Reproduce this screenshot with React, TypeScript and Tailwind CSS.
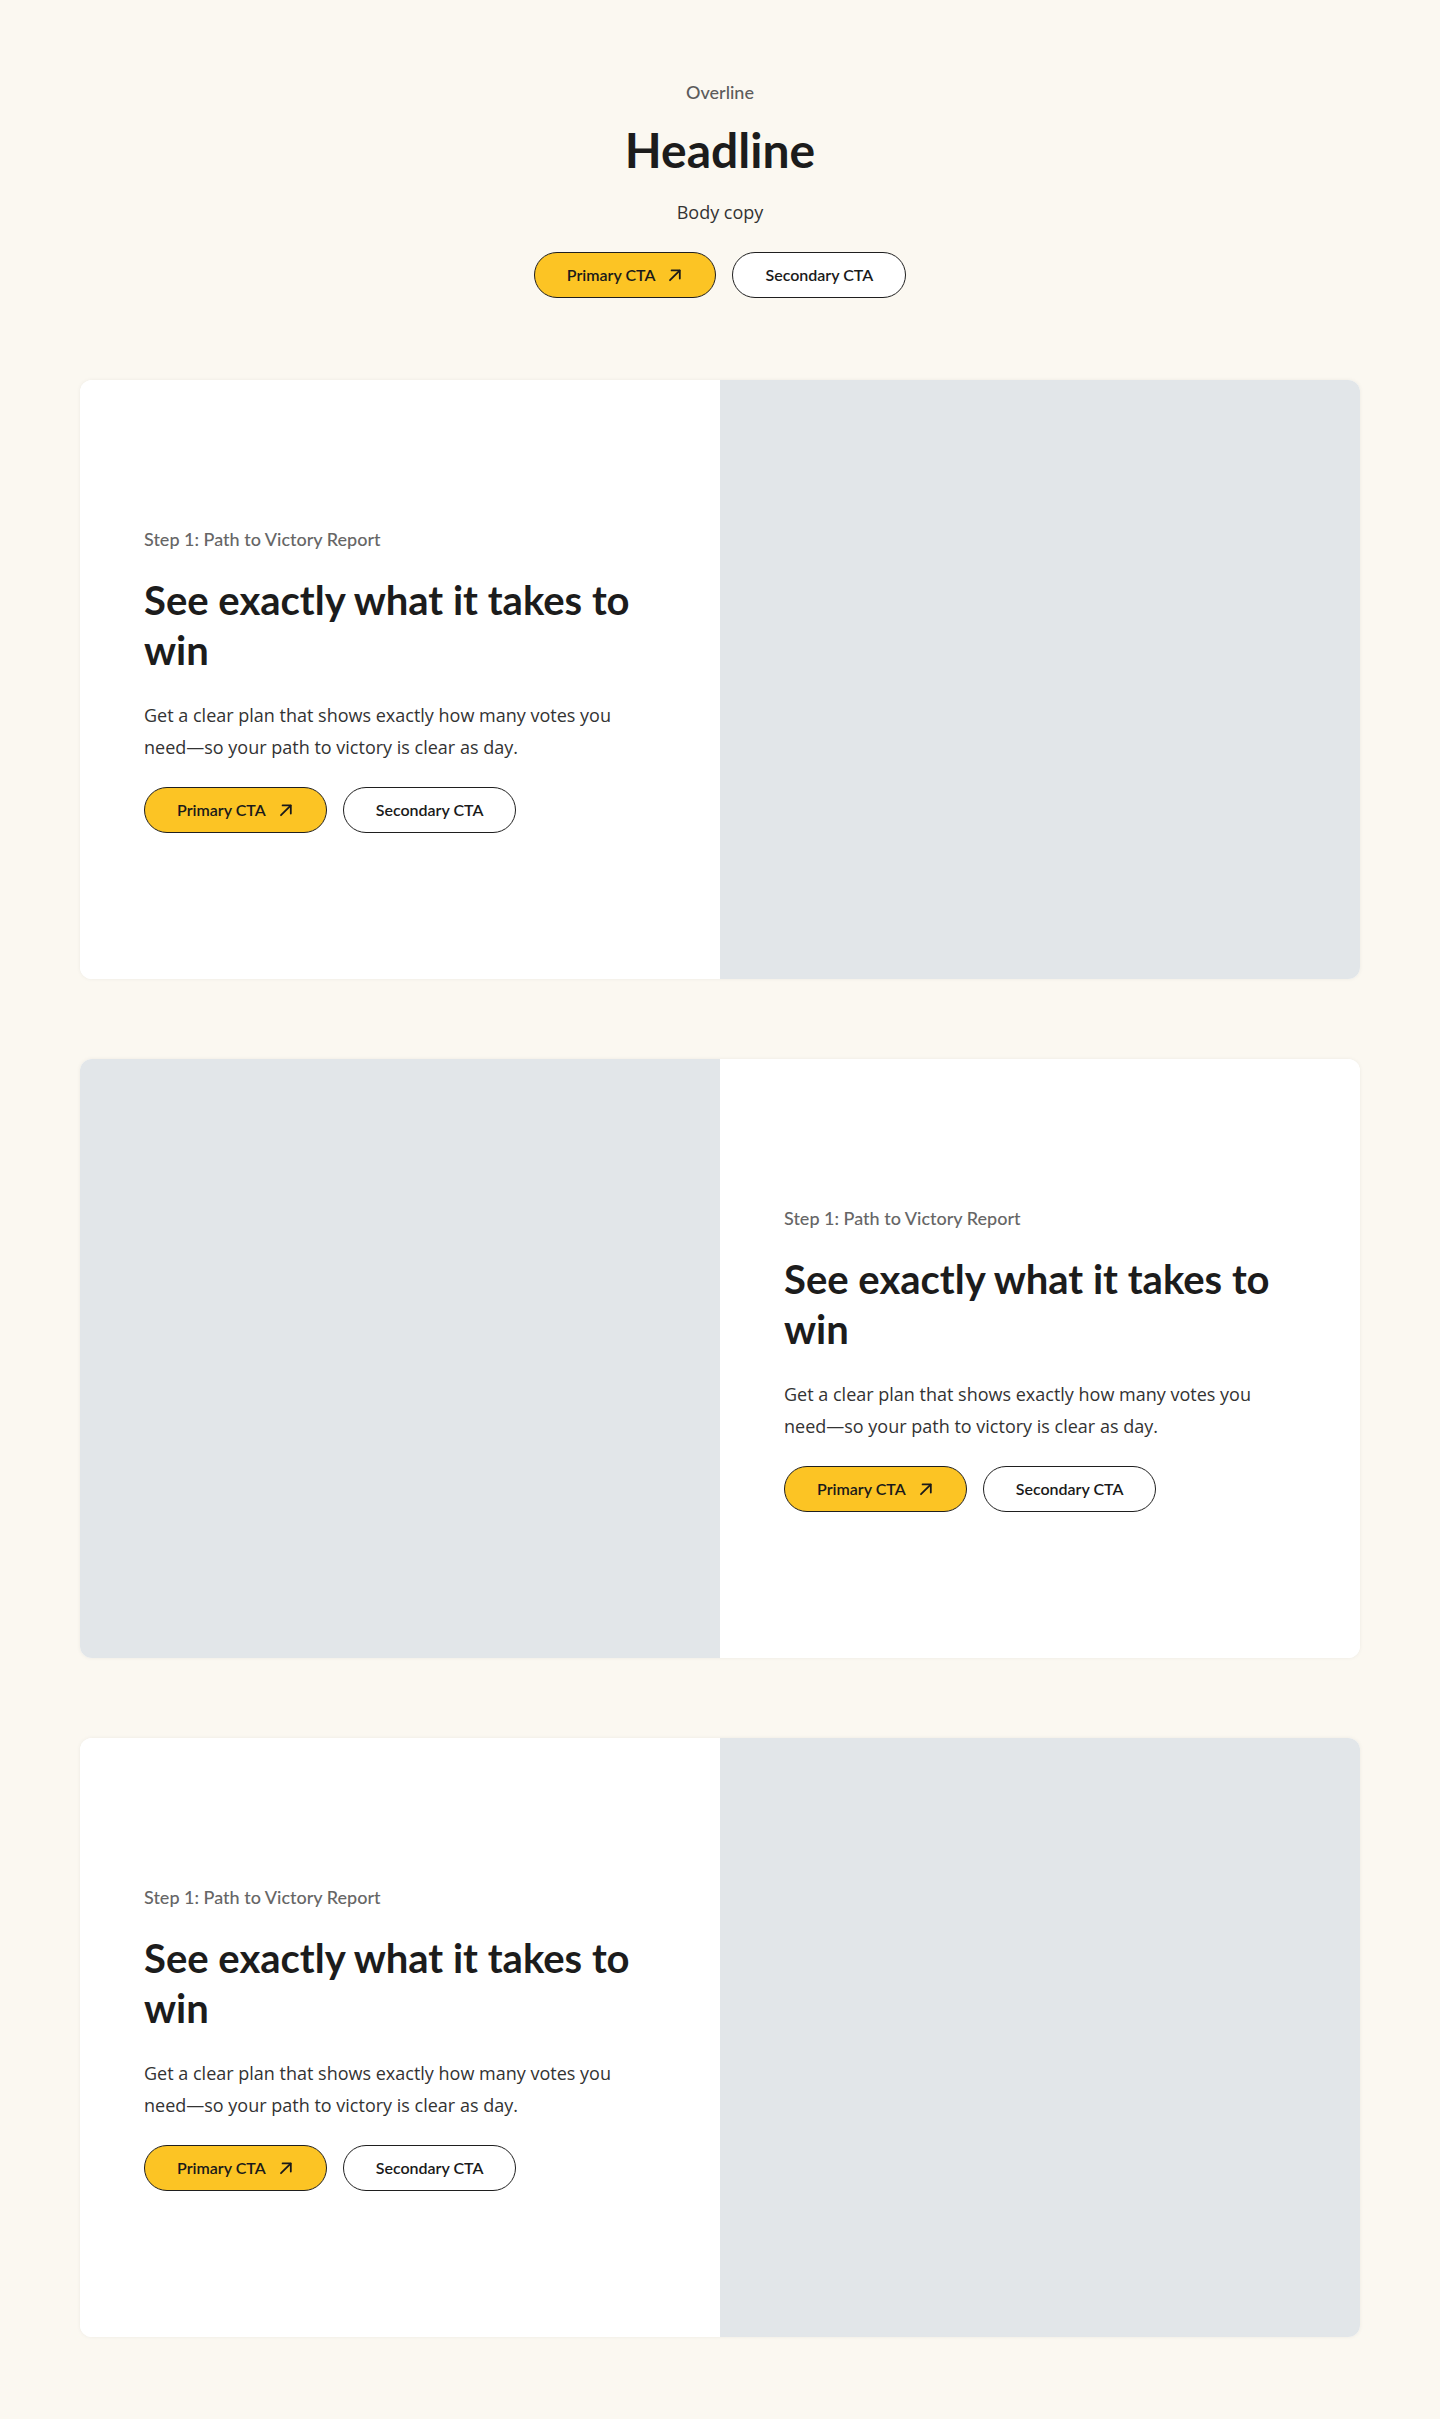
import React from "react";

const heading = "font-['Lato',_'Inter',_sans-serif]";
const body = "font-['Open_Sans',_'Noto_Sans',_sans-serif]";

function Arrow() {
  return (
    <svg width="16" height="16" viewBox="0 0 16 16" fill="none" aria-hidden="true">
      <path d="M3 13.2 L12.6 3.6" stroke="#1a1a1a" strokeWidth="1.8" strokeLinecap="round" />
      <path d="M4.6 3.4 H12.8 V11.6" stroke="#1a1a1a" strokeWidth="1.8" strokeLinecap="round" strokeLinejoin="round" />
    </svg>
  );
}

function Buttons({ center = false }: { center?: boolean }) {
  return (
    <div className={`flex gap-4 ${center ? "justify-center" : ""}`}>
      <button
        className={`${heading} flex items-center gap-3 rounded-full border border-[#1f1f1f] bg-[#fcc424] px-8 py-[10px] text-base font-semibold leading-6 text-[#1a1a1a]`}
      >
        <span>Primary CTA</span>
        <Arrow />
      </button>
      <button
        className={`${heading} flex items-center rounded-full border border-[#1f1f1f] bg-white px-8 py-[10px] text-base font-semibold leading-6 text-[#1a1a1a]`}
      >
        Secondary CTA
      </button>
    </div>
  );
}

function TextBlock() {
  return (
    <div className="flex flex-col justify-center bg-white px-16">
      <p className={`${heading} text-lg font-medium leading-6 text-[#666666]`}>
        Step 1: Path to Victory Report
      </p>
      <h2 className={`${heading} mt-6 text-[40px] font-bold leading-[1.25] text-[#1c1c1c]`}>
        See exactly what it takes to win
      </h2>
      <p className={`${body} mt-6 text-lg leading-8 text-[#333333]`}>
        Get a clear plan that shows exactly how many votes you need—so your path to victory is
        clear as day.
      </p>
      <div className="mt-6">
        <Buttons />
      </div>
    </div>
  );
}

function Placeholder() {
  return <div className="bg-[#e2e6e9]" />;
}

function Card({ reverse = false }: { reverse?: boolean }) {
  return (
    <div className="grid h-[599px] grid-cols-2 overflow-hidden rounded-xl bg-white shadow-[0_0_4px_rgba(0,0,0,0.06)]">
      {reverse ? (
        <>
          <Placeholder />
          <TextBlock />
        </>
      ) : (
        <>
          <TextBlock />
          <Placeholder />
        </>
      )}
    </div>
  );
}

export default function App() {
  return (
    <div className="min-h-screen w-full bg-[#fbf8f1] px-20 pb-20 pt-20">
      <section className="flex flex-col items-center text-center">
        <p className={`${heading} text-lg font-medium leading-6 text-[#5c5c5c]`}>Overline</p>
        <h1 className={`${heading} mt-4 text-[48px] font-bold leading-[1.25] text-[#1c1c1c]`}>
          Headline
        </h1>
        <p className={`${body} mt-4 text-lg leading-8 text-[#333333]`}>Body copy</p>
        <div className="mt-6">
          <Buttons center />
        </div>
      </section>
      <div className="mt-[82px] flex flex-col gap-20">
        <Card />
        <Card reverse />
        <Card />
      </div>
    </div>
  );
}
